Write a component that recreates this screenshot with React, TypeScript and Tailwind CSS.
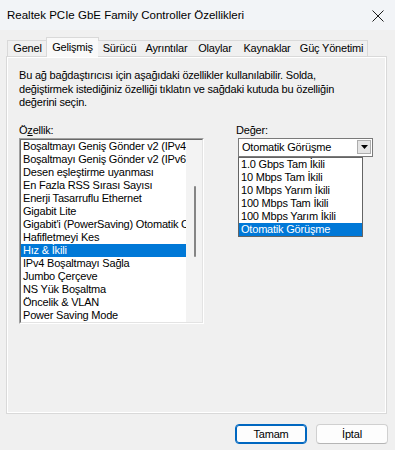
import React from "react"

const properties = [
  "Boşaltmayı Geniş Gönder v2 (IPv4)",
  "Boşaltmayı Geniş Gönder v2 (IPv6)",
  "Desen eşleştirme uyanması",
  "En Fazla RSS Sırası Sayısı",
  "Enerji Tasarruflu Ethernet",
  "Gigabit Lite",
  "Gigabit'i (PowerSaving) Otomatik C",
  "Hafifletmeyi Kes",
  "Hız & İkili",
  "IPv4 Boşaltmayı Sağla",
  "Jumbo Çerçeve",
  "NS Yük Boşaltma",
  "Öncelik & VLAN",
  "Power Saving Mode",
]

const values = [
  "1.0 Gbps Tam İkili",
  "10 Mbps Tam İkili",
  "10 Mbps Yarım İkili",
  "100 Mbps Tam İkili",
  "100 Mbps Yarım İkili",
  "Otomatik Görüşme",
]

const tabs = [
  { label: "Genel", w: "w-[40px]" },
  { label: "Gelişmiş", w: "w-[53px]", active: true },
  { label: "Sürücü", w: "w-[43px]" },
  { label: "Ayrıntılar", w: "w-[51px]" },
  { label: "Olaylar", w: "w-[46px]" },
  { label: "Kaynaklar", w: "w-[58px]" },
  { label: "Güç Yönetimi", w: "w-[72px]" },
]

export default function App() {
  return (
    <div className="w-[395px] h-[450px] bg-[#f0f0f0] flex flex-col overflow-hidden text-black font-['Liberation_Sans',Arial,sans-serif] text-[11px] leading-[13px] tracking-[-0.2px] select-none">
      {/* title bar */}
      <div className="h-[30px] shrink-0 flex items-center justify-between pl-[7px] pr-[11px] bg-[#f2f4f7] text-[11.5px] tracking-normal">
        <span className="pt-[1px]">Realtek PCIe GbE Family Controller Özellikleri</span>
        <svg width="12" height="12" viewBox="0 0 12 12" className="mt-[1px]">
          <path d="M0.5 0.5L11.5 11.5M11.5 0.5L0.5 11.5" stroke="#1b1b1b" strokeWidth="1" />
        </svg>
      </div>

      {/* tabs */}
      <div className="relative z-10 h-[27px] shrink-0 flex items-end pl-[7px]">
        {tabs.map((t, i) =>
          t.active ? (
            <div
              key={t.label}
              className={`${t.w} h-[20px] flex items-start justify-center pt-[3px] bg-[#f9f9f9] border border-b-0 border-[#d9d9d9] -ml-px`}
            >
              {t.label}
            </div>
          ) : (
            <div
              key={t.label}
              className={`${t.w} h-[16px] mb-px flex items-center justify-center bg-[#f0f0f0] border-t border-[#d9d9d9] ${
                i === 0 ? "border-l" : ""
              } ${i === tabs.length - 1 ? "border-r" : ""} ${i === 2 ? "-ml-px" : ""}`}
            >
              {t.label}
            </div>
          )
        )}
      </div>

      {/* tab page */}
      <div className="-mt-px ml-[6px] w-[381px] h-[358px] shrink-0 border border-[#d9d9d9] shadow-[inset_0_0_0_1px_#ffffff] pt-[12px] px-[12px]">
        <p className="leading-[13.5px]">
          Bu ağ bağdaştırıcısı için aşağıdaki özellikler kullanılabilir. Solda,
          <br />
          değiştirmek istediğiniz özelliği tıklatın ve sağdaki kutuda bu özelliğin
          <br />
          değerini seçin.
        </p>

        <div className="mt-[14px] flex">
          {/* property list */}
          <div className="w-[185px]">
            <div className="h-[14px]">
              Ö<span className="underline">z</span>ellik:
            </div>
            <div className="h-[186px] border border-t-[#a0a0a0] border-l-[#a0a0a0] border-r-white border-b-white">
              <div className="h-full flex bg-white border border-t-[#696969] border-l-[#696969] border-r-[#e3e3e3] border-b-[#e3e3e3]">
                <div className="w-[165px] overflow-hidden whitespace-nowrap">
                  {properties.map((p) => (
                    <div
                      key={p}
                      className={`h-[13px] leading-[13px] pl-[2px] ${
                        p === "Hız & İkili" ? "bg-[#0078d7] text-white" : ""
                      }`}
                    >
                      {p}
                    </div>
                  ))}
                </div>
                <div className="relative w-[16px] bg-[#f3f3f3]">
                  <div className="absolute left-[8px] top-[46px] w-[2px] h-[71px] rounded-full bg-[#858585]" />
                </div>
              </div>
            </div>
          </div>

          {/* value */}
          <div className="ml-[32px] w-[137px]">
            <div className="h-[14px]">
              De<span className="underline">ğ</span>er:
            </div>
            <div className="ml-[2px] w-[135px] h-[19px] flex items-center border border-[#7a7a7a] bg-white">
              <span className="flex-1 pl-[3px]">Otomatik Görüşme</span>
              <div className="w-[14px] h-[14px] mr-[1px] flex items-center justify-center bg-[#e5e5e5] border border-[#adadad]">
                <svg width="7" height="4" viewBox="0 0 7 4">
                  <path d="M0 0H7L3.5 4Z" fill="#000" />
                </svg>
              </div>
            </div>
            <div className="ml-[2px] w-[125px] border border-[#646464] bg-white">
              {values.map((v) => (
                <div
                  key={v}
                  className={`h-[13px] leading-[13px] pl-[2px] whitespace-nowrap ${
                    v === "Otomatik Görüşme" ? "bg-[#0078d7] text-white" : ""
                  }`}
                >
                  {v}
                </div>
              ))}
            </div>
          </div>
        </div>
      </div>

      {/* buttons */}
      <div className="mt-[10px] flex justify-end gap-[9px] pr-[7px]">
        <button className="w-[72px] h-[20px] rounded-[4px] bg-[#fdfdfd] border border-[#0067c0] shadow-[inset_0_0_0_1px_#0067c0] text-[11px] leading-[13px]">
          Tamam
        </button>
        <button className="w-[72px] h-[20px] rounded-[4px] bg-[#fdfdfd] border border-[#d0d0d0] border-b-[#b5b5b5] text-[11px] leading-[13px]">
          İptal
        </button>
      </div>
    </div>
  )
}
